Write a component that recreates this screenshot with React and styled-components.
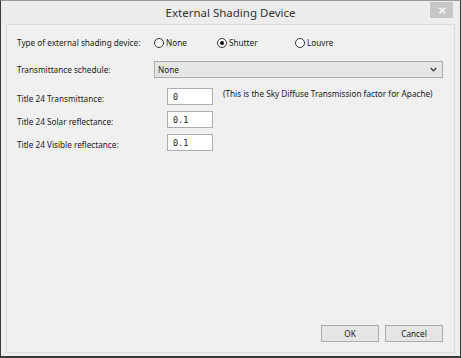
import React from 'react'
import styled, { createGlobalStyle } from 'styled-components'

const GlobalStyle = createGlobalStyle`
    html, body {
        margin: 0;
        padding: 0;
        background: #ffffff;
    }
    body {
        font-family: "Noto Sans", "Open Sans", sans-serif;
    }
`

const Window = styled.div`
    width: 461px;
    height: 358px;
    box-sizing: border-box;
    background: #ededed;
    border-left: 1px solid #3a3a3a;
    border-right: 1px solid #3a3a3a;
    border-top: 1px solid #9a9a9a;
    border-bottom: 2px solid #3a3a3a;
    display: flex;
    flex-direction: column;
`

const TitleBar = styled.div`
    height: 23px;
    position: relative;
    display: flex;
    align-items: center;
    justify-content: center;
    color: #333333;
    font-size: 11.5px;
`

const CloseButton = styled.div`
    position: absolute;
    top: 1px;
    right: 7px;
    width: 23px;
    height: 16px;
    background: #c7c7c7;
    color: #ffffff;
    font-size: 10px;
    font-weight: 700;
    display: flex;
    align-items: center;
    justify-content: center;
`

const Panel = styled.div`
    flex: 1;
    margin: 0 5px 3px 5px;
    border: 1px solid #dcdcdc;
    background: #f0f0f0;
    display: flex;
    flex-direction: column;
    padding: 9px 11px 10px 10px;
    font-size: 8.2px;
    color: #1a1a1a;
`

const Row = styled.div`
    display: flex;
    align-items: center;
    height: ${p => p.h || 17}px;
    margin-top: ${p => p.mt || 0}px;
`

const Label = styled.div`
    width: ${p => p.w || 137}px;
    flex-shrink: 0;
    padding-top: ${p => p.drop || 0}px;
`

const RadioOption = styled.label`
    display: flex;
    align-items: center;
    gap: 2px;
    width: ${p => p.w}px;
`

const RadioCircle = styled.span`
    width: 8px;
    height: 8px;
    border: 1px solid #333333;
    border-radius: 50%;
    background: #ffffff;
    display: flex;
    align-items: center;
    justify-content: center;
    &::after {
        content: '';
        width: 4px;
        height: 4px;
        border-radius: 50%;
        background: ${p => (p.checked ? '#111111' : 'transparent')};
    }
`

const Select = styled.div`
    flex: 1;
    height: 15px;
    border: 1px solid #acacac;
    background: #e5e5e5;
    display: flex;
    align-items: center;
    justify-content: space-between;
    padding: 0 5px 0 3px;
`

const Input = styled.div`
    box-sizing: border-box;
    width: 46px;
    height: 17px;
    border: 1px solid #abadb3;
    background: #ffffff;
    display: flex;
    align-items: center;
    padding-left: 5px;
    font-family: "DejaVu Sans Mono", "Liberation Mono", monospace;
    font-size: 8.5px;
    margin-left: 13px;
`

const Note = styled.div`
    margin-left: 10px;
    align-self: flex-start;
    white-space: nowrap;
`

const Footer = styled.div`
    margin-top: auto;
    display: flex;
    justify-content: flex-end;
    gap: 6px;
`

const Button = styled.div`
    width: 56px;
    height: 15px;
    border: 1px solid #acacac;
    background: #e5e5e5;
    display: flex;
    align-items: center;
    justify-content: center;
`

const Chevron = () => (
    <svg width="7" height="5" viewBox="0 0 7 5">
        <path d="M0.8 1 L3.5 3.8 L6.2 1" fill="none" stroke="#333" strokeWidth="1.2" />
    </svg>
)

const options = [
    { name: 'None', w: 63 },
    { name: 'Shutter', w: 78 },
    { name: 'Louvre', w: 60 },
]

const fields = [
    { label: 'Title 24 Transmittance:', value: '0', note: '(This is the Sky Diffuse Transmission factor for Apache)' },
    { label: 'Title 24 Solar reflectance:', value: '0.1' },
    { label: 'Title 24 Visible reflectance:', value: '0.1' },
]

const App = () => {
    return (
        <>
            <GlobalStyle />
            <Window>
                <TitleBar>
                    External Shading Device
                    <CloseButton>✕</CloseButton>
                </TitleBar>
                <Panel>
                    <Row>
                        <Label>Type of external shading device:</Label>
                        {options.map(o => (
                            <RadioOption key={o.name} w={o.w}>
                                <RadioCircle checked={o.name === 'Shutter'} />
                                {o.name}
                            </RadioOption>
                        ))}
                    </Row>
                    <Row mt={10}>
                        <Label>Transmittance schedule:</Label>
                        <Select>
                            None
                            <Chevron />
                        </Select>
                    </Row>
                    {fields.map((f, i) => (
                        <Row key={f.label} mt={i === 0 ? 10 : 6} h={17}>
                            <Label drop={4}>{f.label}</Label>
                            <Input>{f.value}</Input>
                            {f.note && <Note>{f.note}</Note>}
                        </Row>
                    ))}
                    <Footer>
                        <Button>OK</Button>
                        <Button>Cancel</Button>
                    </Footer>
                </Panel>
            </Window>
        </>
    )
}

export default App
